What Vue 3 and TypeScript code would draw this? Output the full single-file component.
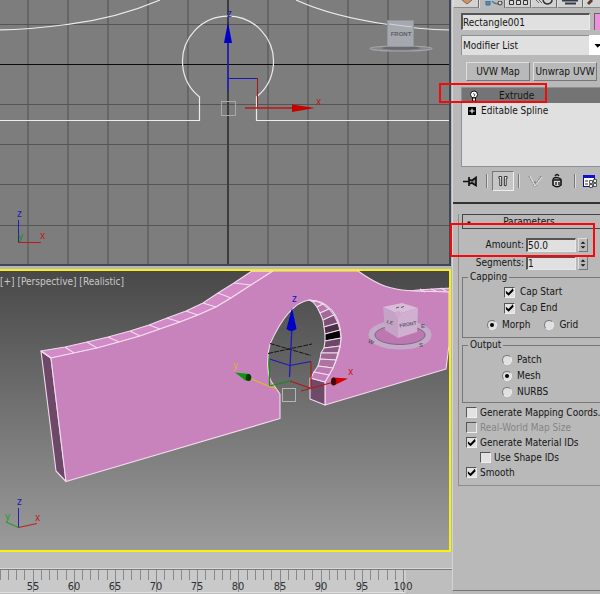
<script setup lang="ts">
import { ref } from 'vue'

type Point = [number, number]

const gridX = [28, 68, 108, 148, 188, 268, 308, 348, 388, 428]
const gridY = [24, 104, 144, 184, 225]

const backEdge: Point[] = [[41, 351], [65, 347], [87, 342], [108, 337], [130, 331], [149, 325], [167, 318], [186, 311], [203, 303], [218, 293], [234, 283], [252, 271]]
const frontEdge: Point[] = [[51, 358], [74, 353], [97, 348], [119, 342], [140, 336], [160, 329], [180, 322], [198, 315], [216, 307], [231, 298], [251, 285], [273, 271]]

const holeFront: Point[] = [[309, 300], [316, 301], [323, 304], [329, 309], [334, 315], [338, 323], [340, 330], [341, 338], [340, 346], [338, 353], [336, 360], [333, 368], [329, 375], [325, 382]]
const holeBack: Point[] = [[309, 300], [313, 302], [317, 307], [320, 313], [323, 320], [324, 327], [325, 334], [325, 341], [324, 348], [321, 353], [320, 359], [318, 366], [314, 372], [311, 378]]
const shades = ['#c883bd', '#c480b9', '#b977ae', '#a3699a', '#7c5075', '#4b3047', '#050305', '#6d4766', '#8a5b82', '#9d6894', '#ad73a4', '#bb7bb0', '#c580ba']

const join = (pts: Point[]) => pts.map((p) => p.join(',')).join(' ')
const topStrip = join([...backEdge, ...[...frontEdge].reverse()])
const rim = shades.map((fill, i) => ({
  fill,
  points: join([holeFront[i], holeFront[i + 1], holeBack[i + 1], holeBack[i]]),
}))

const ticks = Array.from({ length: 50 }, (_, i) => {
  const frame = 51 + i
  return { frame, x: Math.round(403 - (100 - frame) * 8.23), major: frame % 5 === 0 }
})

const objectName = ref('Rectangle001')
const amount = ref('50.0')
const segments = ref('1')
const capStart = ref(true)
const capEnd = ref(true)
const capType = ref('Morph')
const output = ref('Mesh')
const outputs = ['Patch', 'Mesh', 'NURBS']
const mapping = ref(false)
const realWorld = ref(false)
const materialIds = ref(true)
const shapeIds = ref(false)
const smooth = ref(true)
</script>

<template>
  <div class="app">
    <main class="views">
      <svg class="view" viewBox="0 0 451 266" role="img" aria-label="Front viewport">
        <rect width="451" height="266" fill="#7d7d7d" />
        <path v-for="x in gridX" :key="'x' + x" :d="`M${x} 0V265`" stroke="#666" stroke-width="2" />
        <path v-for="y in gridY" :key="'y' + y" :d="`M0 ${y + 0.5}H451`" stroke="#555" />
        <path d="M228 0V265" stroke="#3c3c3c" stroke-width="2" />
        <path d="M0 64.5H451" stroke="#0c0c0c" />
        <g fill="none" stroke="#ececec" stroke-width="1.2">
          <path d="M0 29.8C28 29.8 48 27 68 24.3C104 20 132 12 160 0" />
          <path d="M296 0C322 12 350 19 388 24.5C410 28 430 29.6 450 30" />
          <path d="M0 120.5H199.5V97A45.5 45.5 0 1 1 256.5 97V120.5H451" />
        </g>
        <g fill="none">
          <path d="M228 91V40" stroke="#2620c0" stroke-width="1.5" />
          <path d="M228 78.5H257.5" stroke="#1c18b8" />
          <path d="M257.5 78V108" stroke="#a01a1a" />
          <path d="M245 108H300" stroke="#c01414" stroke-width="1.3" />
          <rect x="221.5" y="101.5" width="14" height="14" stroke="#a9a9a9" />
        </g>
        <path d="M228 22L232 43H224Z" fill="#0000c8" />
        <path d="M315 108L292 104.5V112Z" fill="#c80000" />
        <text x="227" y="17" class="axis" fill="#1410c0">z</text>
        <text x="316" y="105" class="axis" fill="#c01818">x</text>
        <g>
          <ellipse cx="401" cy="48.5" rx="31" ry="2.5" fill="#858689" stroke="#a2a5aa" stroke-width="1.2" />
          <ellipse cx="401" cy="48" rx="19" ry="1.8" fill="#686a6e" />
          <rect x="387.5" y="20.5" width="26" height="26" fill="#a5a8af" stroke="#92969f" />
          <path d="M389 24L412 27" stroke="#d2d4d8" />
          <text x="401" y="36" class="cube">FRONT</text>
        </g>
        <g fill="none">
          <path d="M18.5 220V242" stroke="#2020b8" />
          <path d="M18 242.5H41" stroke="#c01818" />
        </g>
        <text x="17" y="217" class="axis" fill="#1c18c0">z</text>
        <text x="18" y="240" class="axis" fill="#18901c">y</text>
        <text x="40" y="239" class="axis" fill="#c01818">x</text>
        <path d="M450 0V265H0" fill="none" stroke="#404756" stroke-width="2" />
      </svg>

      <svg class="view" viewBox="0 269 451 283" role="img" aria-label="Perspective viewport">
        <defs>
          <linearGradient id="sky" x1="0" y1="0" x2="0" y2="1">
            <stop offset="0" stop-color="#484848" />
            <stop offset="1" stop-color="#9c9c9c" />
          </linearGradient>
        </defs>
        <rect y="269" width="451" height="283" fill="url(#sky)" />
        <g stroke="#f1dced" stroke-width="1.1" stroke-linejoin="round">
          <polygon points="41,351 51,358 66,481.5 56,471" fill="#6d4868" />
          <polygon :points="topStrip" fill="#d38bc8" />
          <path d="M410 291C425 289 437 289 450 288V292C436 291 424 292 410 291Z" fill="#d38bc8" />
          <path
            d="M51 358L74 353L97 348L119 342L140 336L160 329L180 322L198 315L216 307L231 298L251 285L273 271H358C375 283 386 288 402 290C420 292 436 291 449 292V345L446 369L325 405V382C334 367 341 353 341 336C340 315 328 300 309 300C291 303 278 326 270 344C266 359 267 377 273 384L280 394V418.5L66 481.5Z"
            fill="#c883bd"
          />
          <polygon points="325,382 325,405 310,399 310,378" fill="#704b69" />
          <polygon v-for="(q, i) in rim" :key="i" :points="q.points" :fill="q.fill" />
          <path v-for="(p, i) in backEdge" :key="'s' + i" :d="`M${p[0]} ${p[1]}L${frontEdge[i][0]} ${frontEdge[i][1]}`" />
          <path d="M420 289L425 292M431 289L436 291M441 288L446 291" />
        </g>

        <g fill="none">
          <path d="M270 343.5L311 355.5M268 353.5L312 344" stroke="#161616" stroke-dasharray="5 1" />
          <path d="M292 326L289.5 377" stroke="#2018c0" stroke-width="1.3" />
          <path d="M269.5 359L290 365.5L311 361.5" stroke="#1c18b8" stroke-width="1.2" />
          <path d="M311 361.5V388M290 381L310 388M301 391L334 382" stroke="#b01818" stroke-width="1.2" />
          <path d="M290 381L269.5 386V359" stroke="#109018" stroke-width="1.2" />
          <path d="M249 378L277 389.5" stroke="#e0b820" stroke-width="1.2" />
          <rect x="282.5" y="388.5" width="13" height="13" stroke="#b4b4b4" />
        </g>
        <path d="M292 308L296.5 329Q291 333 286.5 329Z" fill="#0000c8" />
        <path d="M348 378.5L333 377.5L335 385Z" fill="#d00000" />
        <ellipse cx="333.5" cy="381.5" rx="2.5" ry="4" fill="#400808" />
        <path d="M235 372.5L250 374L246 381Z" fill="#0a9a10" />
        <ellipse cx="248.5" cy="377.5" rx="2.8" ry="3.5" fill="#063c08" />
        <text x="292" y="302" class="axis" fill="#1410c8">z</text>
        <text x="348" y="375" class="axis" fill="#c81818">x</text>
        <text x="233" y="369" class="axis" fill="#e0b020">y</text>

        <g>
          <ellipse cx="400" cy="335" rx="28.5" ry="11.5" fill="none" stroke="#c3aac9" stroke-width="6" />
          <ellipse cx="400" cy="335" rx="25" ry="9.5" fill="#bd78b1" stroke="#806883" />
          <polygon points="383,307 402,303 418,308 398,314" fill="#d9bcda" />
          <polygon points="383,307 398,314 398,338 385,330" fill="#c5a3c6" />
          <polygon points="398,314 418,308 417,332 398,338" fill="#cfb0d1" />
          <ellipse cx="398" cy="314" rx="3" ry="3" fill="#cda9cd" />
          <path d="M396 308l3 -1M401 307.5l3 -1" stroke="#5f5a66" />
          <text x="408" y="326" class="cube small" transform="rotate(-10 408 325)">FRONT</text>
          <text x="390" y="324" class="cube small" transform="rotate(20 390 322)">LE</text>
          <text x="371" y="344" class="cube" transform="rotate(30 371 342)">W</text>
          <text x="421" y="347" class="cube">S</text>
          <text x="423" y="328" class="cube">E</text>
        </g>

        <g fill="none">
          <path d="M18.5 508V528" stroke="#2020b8" />
          <path d="M18.5 527.5L37 523.5" stroke="#c02020" stroke-width="1.2" />
          <path d="M18.5 527.5L6 522" stroke="#20a028" stroke-width="1.2" />
        </g>
        <text x="17" y="505" class="axis" fill="#1c18c0">z</text>
        <text x="35" y="521" class="axis" fill="#c02020">x</text>
        <text x="5" y="520" class="axis" fill="#20a028">y</text>
        <text x="0" y="285" class="caption">[+] [Perspective] [Realistic]</text>
        <path d="M-2 270H450V551H-2" fill="none" stroke="#f8f010" stroke-width="2" />
      </svg>

      <svg class="timeline" viewBox="0 552 452 42" role="img" aria-label="Time ruler">
        <rect y="552" width="452" height="42" fill="#bebebe" />
        <rect y="570" width="404" height="22" fill="#c9c9c9" />
        <path d="M0 568.5H452" stroke="#d8d8d8" />
        <path d="M0 569.5H452" stroke="#7a7a7a" />
        <path d="M0 592.5H405V570" fill="none" stroke="#e0e0e0" />
        <template v-for="t in ticks" :key="t.frame">
          <path :d="`M${t.x + 0.5} 570V${t.major ? 592 : 580}`" stroke="#85898c" />
          <text v-if="t.major" :x="t.x" y="590" class="frame">{{ t.frame }}</text>
        </template>
      </svg>
    </main>

    <aside class="panel">
      <nav class="tabs">
        <button class="tab" aria-label="Create">
          <svg viewBox="0 0 24 7"><path d="M8 0L13 4L18 0" fill="#c89468" stroke="#8c6340" /></svg>
        </button>
        <button class="tab active" aria-label="Modify">
          <svg viewBox="0 0 24 7"><path d="M6 0H10V4H6ZM12 0Q13 3 19 3" fill="#4d8cc0" stroke="#3d6c94" /><circle cx="20" cy="2" r="2" fill="#ddd" stroke="#333" /></svg>
        </button>
        <button class="tab" aria-label="Hierarchy">
          <svg viewBox="0 0 24 7"><path d="M3.5 0.5h4v4h-4zM10.5 0.5h4v4h-4zM17.5 0.5h4v4h-4z" fill="#ddd" stroke="#333" /></svg>
        </button>
        <button class="tab" aria-label="Motion">
          <svg viewBox="0 0 24 7"><path d="M11 0Q12 4 16 4Q20 3 20 0" fill="none" stroke="#333" stroke-width="1.5" /><path d="M4 0L7 3M7 0L10 3" stroke="#666" /></svg>
        </button>
        <button class="tab" aria-label="Display">
          <svg viewBox="0 0 24 7"><path d="M4 0.5H20M7 3.5H18" fill="none" stroke="#333b48" stroke-width="2" /></svg>
        </button>
        <button class="tab" aria-label="Utilities">
          <svg viewBox="0 0 24 7"><path d="M4 4L8 0" stroke="#583a30" stroke-width="3" /></svg>
        </button>
      </nav>

      <div class="stack">
        <div class="name-row">
          <input v-model="objectName" class="well name" aria-label="Object name" />
          <button class="swatch" aria-label="Object color"></button>
        </div>
        <div class="picker">
          <select class="well" aria-label="Modifier List"><option>Modifier List</option></select>
          <svg class="arrow" viewBox="0 0 12 18"><path d="M6 8H13L9.5 12Z" fill="#000" /></svg>
        </div>
        <div class="sets">
          <button class="raised">UVW Map</button>
          <button class="raised">Unwrap UVW</button>
        </div>
        <ul class="modifiers">
          <li class="chosen">
            <svg class="bulb" viewBox="0 0 12 14"><circle cx="6" cy="5.5" r="3.5" fill="#fff" stroke="#111" /><path d="M4.5 9H7.5V12H4.5Z" fill="#fff" stroke="#111" /><path d="M5 4.5L7 5.5L6 7.5" fill="none" stroke="#555" /></svg>
            <span>Extrude</span>
          </li>
          <li>
            <svg class="plus" viewBox="0 0 8 8"><rect width="8" height="8" fill="#000" /><path d="M4 1.5V6.5M1.5 4H6.5" stroke="#fff" /></svg>
            <span>Editable Spline</span>
          </li>
        </ul>
      </div>

      <div class="tools">
        <button class="tool" aria-label="Pin stack">
          <svg viewBox="0 0 22 20"><path d="M3 10.5H9" stroke="#111" stroke-width="1.5" /><path d="M9 6V15M9 8.5L12 9.5L16 6.5V14.5L12 12L9 13" fill="#888" stroke="#111" stroke-width="1.7" /></svg>
        </button>
        <i class="rule"></i>
        <button class="tool pressed" aria-label="Show end result">
          <svg viewBox="0 0 22 20"><path d="M6.5 5H9.5V15H7.5V7H6.5ZM15.5 5H12.5V15H14.5V7H15.5Z" fill="#fff" stroke="#222" /></svg>
        </button>
        <i class="rule"></i>
        <button class="tool" aria-label="Make unique">
          <svg viewBox="0 0 22 20"><path d="M5 5L10 14L11 10L12 14L17 5" fill="none" stroke="#888" stroke-width="1.5" stroke-dasharray="2 1" /><path d="M6 5L11 15L18 6" fill="none" stroke="#e6e6e6" /></svg>
        </button>
        <button class="tool" aria-label="Remove modifier">
          <svg viewBox="0 0 22 20"><path d="M5 9H13V14Q9 17.5 5 14Z" fill="#ddd" stroke="#111" stroke-width="1.6" /><path d="M5 8Q7 5 13 8M7 5Q9 2 11 5M8 11V14M11 11V14" fill="none" stroke="#111" stroke-width="1.3" /></svg>
        </button>
        <i class="rule"></i>
        <button class="tool" aria-label="Configure modifier sets">
          <svg viewBox="0 0 22 20"><rect x="3.5" y="4.5" width="11" height="11" fill="#fff" stroke="#101090" /><path d="M3 5.5H15" stroke="#1010c8" stroke-width="3" /><path d="M5 10H8M5 13H8" stroke="#333" /><path d="M9.5 9.5h3v3h-3zM13.5 8.5h3v3h-3zM9.5 13.5h3v3h-3zM13.5 12.5h3v3h-3z" fill="#eee" stroke="#555" /></svg>
        </button>
      </div>

      <section class="rollout">
        <h2 class="head"><button><b>-</b><span>Parameters</span></button></h2>
        <div class="params">
          <label for="amount">Amount:</label>
          <input id="amount" v-model="amount" class="well" />
          <svg class="spin" viewBox="0 0 10 13"><path d="M5 2L8 5H2ZM5 11L8 8H2Z" fill="#111" /></svg>
          <label for="segments">Segments:</label>
          <input id="segments" v-model="segments" class="well" />
          <svg class="spin" viewBox="0 0 10 13"><path d="M5 2L8 5H2ZM5 11L8 8H2Z" fill="#111" /></svg>
        </div>

        <fieldset>
          <legend>Capping</legend>
          <div class="caps">
            <label><input v-model="capStart" type="checkbox" />Cap Start</label>
            <label><input v-model="capEnd" type="checkbox" />Cap End</label>
          </div>
          <div class="types">
            <label v-for="t in ['Morph', 'Grid']" :key="t"><input v-model="capType" type="radio" name="cap" :value="t" />{{ t }}</label>
          </div>
        </fieldset>

        <fieldset>
          <legend>Output</legend>
          <div class="outs">
            <label v-for="o in outputs" :key="o"><input v-model="output" type="radio" name="out" :value="o" />{{ o }}</label>
          </div>
        </fieldset>

        <div class="flags">
          <label><input v-model="mapping" type="checkbox" />Generate Mapping Coords.</label>
          <label class="off"><input v-model="realWorld" type="checkbox" disabled />Real-World Map Size</label>
          <label><input v-model="materialIds" type="checkbox" />Generate Material IDs</label>
          <label class="sub"><input v-model="shapeIds" type="checkbox" />Use Shape IDs</label>
          <label><input v-model="smooth" type="checkbox" />Smooth</label>
        </div>
      </section>
    </aside>

    <div class="mark mark-modifier"></div>
    <div class="mark mark-amount"></div>
  </div>
</template>

<style>
body {
  background: #b9b9b9;
}
</style>

<style scoped>
.app {
  position: relative;
  display: grid;
  grid-template-columns: minmax(0, 1fr) 148px;
  min-height: 100vh;
  overflow: hidden;
  background: #b9b9b9;
  color: #151515;
  font: 10px/14px "DejaVu Sans Condensed", "DejaVu Sans", sans-serif;
}
.app * {
  box-sizing: border-box;
}
button,
input,
select {
  margin: 0;
  padding: 0;
  border: 0;
  border-radius: 0;
  color: inherit;
  font: inherit;
  appearance: none;
}
button {
  background: none;
}
svg {
  display: block;
}
.views {
  display: flex;
  flex-direction: column;
  background: #b8b8bb;
}
.view {
  width: calc(100% - 1px);
  margin-bottom: 3px;
}
.timeline {
  width: 100%;
  margin-top: -3px;
}
.axis {
  font-size: 10px;
}
.caption {
  fill: #c9c9c9;
}
.cube {
  font: bold 6px "Liberation Sans", sans-serif;
  fill: #5d6068;
  text-anchor: middle;
}
.cube.small {
  font-size: 5px;
}
.frame {
  font-size: 11px;
  fill: #303030;
  text-anchor: middle;
}
.panel {
  min-width: 0;
  margin-bottom: 3px;
  overflow: hidden;
  border-left: 1px solid #d4d4d4;
  border-bottom: 1px solid #777;
  background: #b9b9b9;
  white-space: nowrap;
}
.tabs {
  display: flex;
  height: 8px;
}
.tab {
  flex: none;
  width: 26px;
  height: 8px;
  border-right: 1px solid #6a6a6a;
  border-bottom: 1px solid #8a8a8a;
  border-left: 1px solid #ddd;
  background: #d2d2d2;
}
.tab.active {
  border-bottom: 0;
  background: #b9b9b9;
}
.stack {
  display: flex;
  flex-direction: column;
  padding: 5px 0 0 8px;
}
.well {
  border: 1px solid #e8e8e8;
  border-top: 2px solid #555;
  border-left: 2px solid #555;
  background: #e0e0e0;
}
.name-row {
  display: flex;
  gap: 4px;
}
.name {
  flex: 1;
  min-width: 0;
  height: 17px;
}
.swatch {
  width: 6px;
  border-top: 1px solid #666;
  border-left: 1px solid #666;
  background: #f090dc;
}
.picker {
  display: flex;
  height: 20px;
  margin-top: 5px;
  background: #fff;
}
.picker .well {
  flex: 1;
  border-color: #8a9096;
  border-width: 1px 0 0 1px;
  padding-left: 1px;
}
.arrow {
  width: 11px;
}
.sets {
  display: grid;
  grid-template-columns: 1fr 1fr;
  gap: 3px;
  padding: 7px 3px 0 5px;
}
.raised {
  height: 19px;
  border: 1px solid #dedede;
  border-right-color: #777;
  border-bottom-color: #777;
}
.modifiers {
  height: 80px;
  margin: 6px 0 0;
  padding: 0;
  border: 1px solid #8b9299;
  border-right: 0;
  background: #e0e0e0;
  list-style: none;
}
.modifiers li {
  display: flex;
  align-items: center;
  height: 15px;
  padding-left: 6px;
}
.modifiers span {
  margin-left: 5px;
}
.modifiers .chosen {
  background: #747474;
}
.modifiers .chosen span {
  margin-left: 19px;
}
.bulb {
  width: 12px;
  height: 14px;
}
.plus {
  width: 8px;
  height: 8px;
}
.tools {
  display: flex;
  align-items: center;
  gap: 2px;
  height: 37px;
  padding: 0 1px 7px 7px;
  border-bottom: 2px solid #333;
}
.tool {
  flex: none;
  width: 22px;
  height: 20px;
}
.pressed {
  border: 1px solid #777;
  border-right-color: #eee;
  border-bottom-color: #eee;
  background: #c6c6c6;
}
.rule {
  width: 2px;
  height: 14px;
  margin: 0 2px;
  border-left: 1px solid #777;
  border-right: 1px solid #ddd;
}
.rollout {
  margin: 10px -3px 0 5px;
  padding: 0 0 5px 3px;
  border: 1px solid #8c8c8c;
  border-top: 0;
}
.head {
  margin: 0;
  font: inherit;
}
.head button {
  display: flex;
  width: 100%;
  height: 15px;
  padding: 0 14px 0 4px;
  border: 1px solid #444;
}
.head span {
  flex: 1;
}
.params {
  display: grid;
  grid-template-columns: 62px 50px 10px;
  gap: 4px 2px;
  align-items: center;
  padding-top: 9px;
}
.params label {
  display: block;
  height: 14px;
  text-align: right;
}
.params .well {
  width: 50px;
  height: 14px;
}
.spin {
  width: 10px;
  height: 14px;
  border: 1px solid #ddd;
  border-right-color: #777;
  border-bottom-color: #777;
}
fieldset {
  min-width: 0;
  margin: 0;
  padding: 0;
  border: 1px solid #777;
}
legend {
  margin-left: 5px;
  padding: 0 2px;
}
label {
  display: flex;
  align-items: center;
  gap: 5px;
  height: 16px;
}
input[type="checkbox"] {
  flex: none;
  width: 11px;
  height: 11px;
  border: 1px solid #555;
  border-right-color: #eee;
  border-bottom-color: #eee;
  background: #e2e2e2;
}
input[type="checkbox"]:disabled {
  background: #bbb;
}
input[type="checkbox"]:checked::before {
  display: block;
  width: 9px;
  height: 9px;
  background: #000;
  clip-path: polygon(10% 35%, 38% 60%, 88% 8%, 95% 35%, 40% 92%, 10% 65%);
  content: "";
}
input[type="radio"] {
  flex: none;
  width: 10px;
  height: 10px;
  border: 1px solid #777;
  border-right-color: #eee;
  border-bottom-color: #eee;
  border-radius: 50%;
  background: #e0e0e0;
}
input[type="radio"]:checked::before {
  display: block;
  width: 4px;
  height: 4px;
  margin: 2px;
  border-radius: 50%;
  background: #000;
  content: "";
}
.caps {
  padding-left: 41px;
}
.types {
  display: flex;
  gap: 14px;
  padding: 1px 0 4px 24px;
}
.outs {
  padding: 0 0 2px 39px;
}
.flags {
  padding: 2px 0 0 4px;
}
.flags label {
  gap: 3px;
  height: 15px;
}
.flags .sub {
  padding-left: 14px;
}
.off {
  color: #858585;
}
.mark {
  position: absolute;
  border: 2px solid #f80808;
  pointer-events: none;
}
.mark-modifier {
  top: 83px;
  right: 53px;
  width: 108px;
  height: 20px;
}
.mark-amount {
  top: 223px;
  right: 5px;
  width: 145px;
  height: 34px;
}
</style>
